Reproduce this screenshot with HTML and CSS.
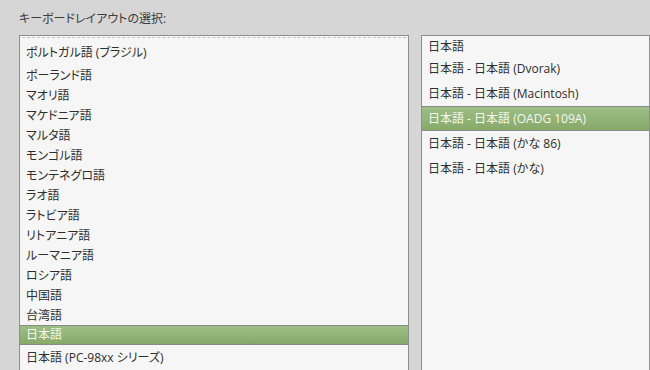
FILE: index.html
```html
<!DOCTYPE html>
<html lang="ja">
<head>
  <meta charset="UTF-8">
  <title>キーボードレイアウトの選択</title>
  <link rel="stylesheet" href="styles.css">
</head>
<body>
  <div class="page">
    <div class="title">キーボードレイアウトの選択:</div>
    <div class="panes">
      <div class="list list-left">
        <div class="row tall">ポルトガル語 (ブラジル)</div>
        <div class="row">ポーランド語</div>
        <div class="row">マオリ語</div>
        <div class="row">マケドニア語</div>
        <div class="row">マルタ語</div>
        <div class="row">モンゴル語</div>
        <div class="row">モンテネグロ語</div>
        <div class="row">ラオ語</div>
        <div class="row">ラトビア語</div>
        <div class="row">リトアニア語</div>
        <div class="row">ルーマニア語</div>
        <div class="row">ロシア語</div>
        <div class="row">中国語</div>
        <div class="row">台湾語</div>
        <div class="row selected">日本語</div>
        <div class="row tall">日本語 (PC-98xx シリーズ)</div>
      </div>
      <div class="list list-right">
        <div class="row">日本語</div>
        <div class="row tall">日本語 - 日本語 (Dvorak)</div>
        <div class="row tall">日本語 - 日本語 (Macintosh)</div>
        <div class="row tall selected">日本語 - 日本語 (OADG 109A)</div>
        <div class="row tall">日本語 - 日本語 (かな 86)</div>
        <div class="row tall">日本語 - 日本語 (かな)</div>
      </div>
    </div>
  </div>
</body>
</html>
```

FILE: styles.css
```css
html, body {
  margin: 0;
  height: 100%;
  overflow: hidden;
}
body {
  background: #d6d6d6;
  font-family: "Open Sans", "Noto Sans CJK JP", sans-serif;
  font-size: 12px;
  font-feature-settings: "palt";
  color: #333;
}
.page {
  padding: 11px 0 0 19px;
}
.title {
  height: 24px;
  line-height: 16px;
  color: #3c3c3c;
}
.panes {
  display: flex;
  gap: 12px;
}
.list {
  background: #f6f6f6;
  border: 1px solid #8f8f8f;
  height: 400px;
}
.list-left {
  width: 388px;
  padding-top: 4px;
  position: relative;
}
.list-left::before {
  content: "";
  position: absolute;
  top: 1px;
  left: 2px;
  right: 2px;
  border-top: 1px dashed #c4c4c4;
}
.list-right {
  flex: 1;
}
.row {
  height: 20px;
  line-height: 20px;
  padding: 1px 0 0 6px;
  color: #2e2e2e;
  box-sizing: border-box;
}
.row.tall {
  height: 25px;
  line-height: 24px;
}
.row.selected {
  background: linear-gradient(#9dbf86, #86a96a);
  border-top: 1px solid #8a8a8a;
  border-bottom: 1px solid #8a8a8a;
  color: #f4f8f0;
  line-height: 18px;
  padding-top: 0;
}
.row.tall.selected {
  line-height: 23px;
}
```
